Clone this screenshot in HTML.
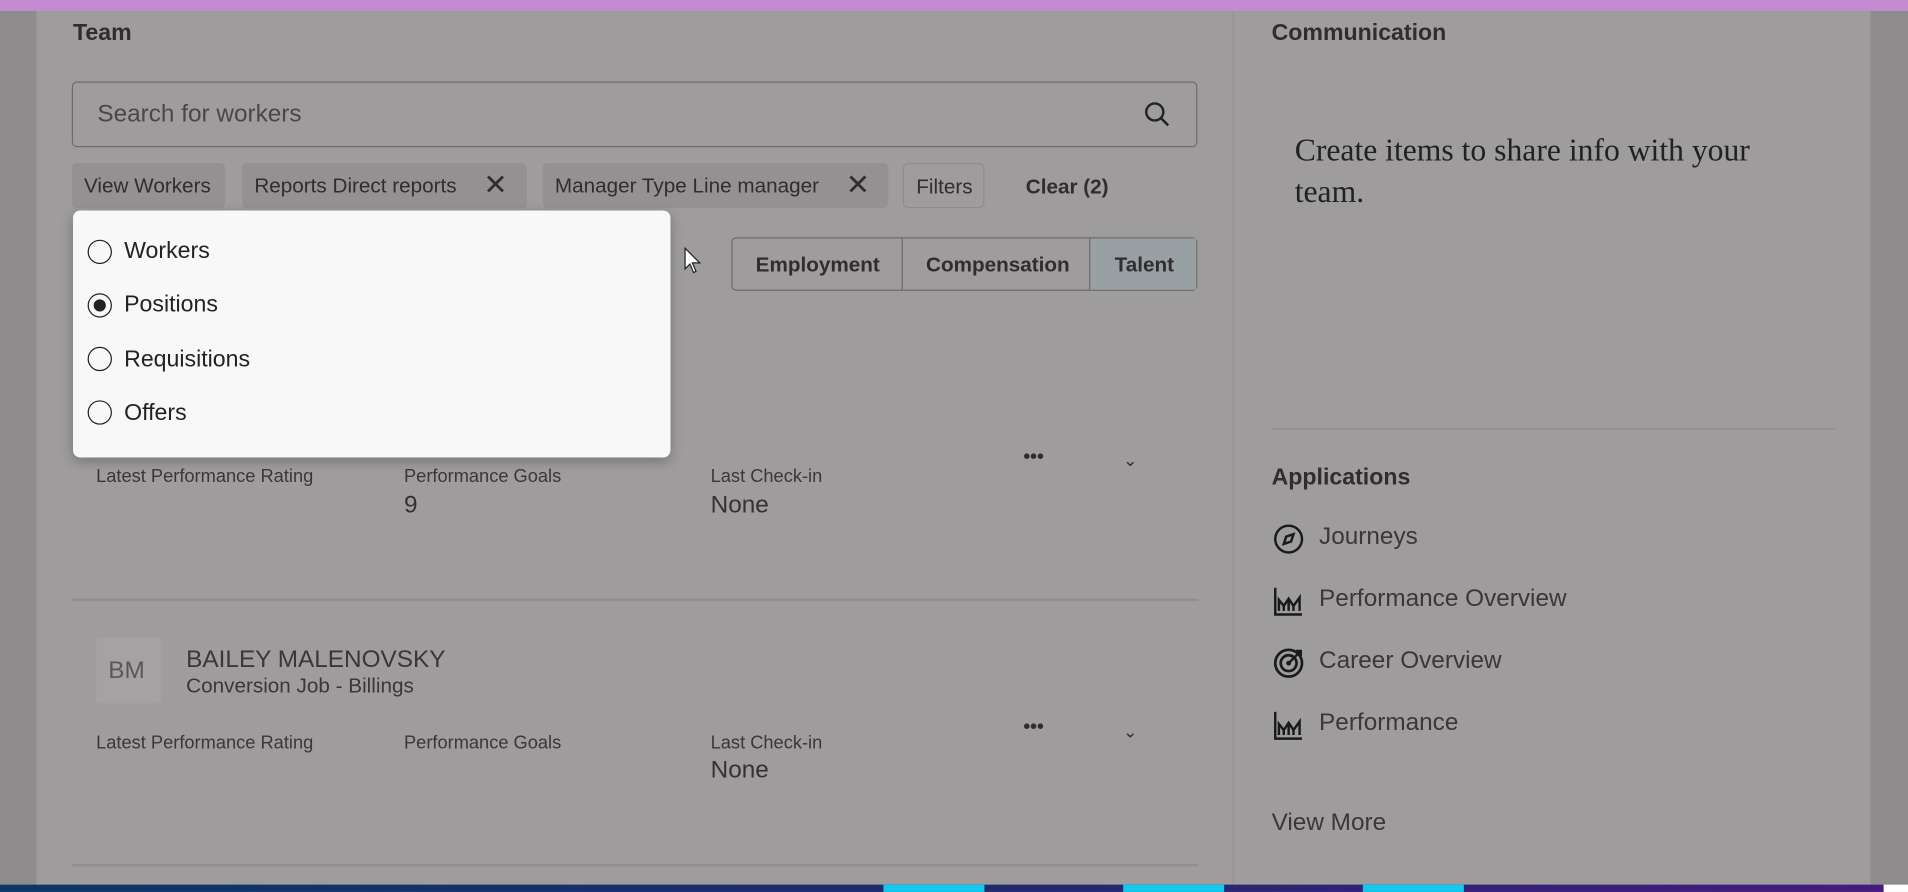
<!DOCTYPE html>
<html><head><meta charset="utf-8"><style>
html,body{margin:0;padding:0;width:1908px;height:892px;overflow:hidden;background:#9c9a9a}
#w{position:absolute;left:0;top:0;width:1568px;height:733px;transform:scale(1.21684);transform-origin:0 0;font-family:"Liberation Sans",sans-serif;color:#2f2e2d}
.a{position:absolute;white-space:nowrap}
.b{font-weight:bold}
.lbl{font-size:15px;color:#3a3837}
.val{font-size:20px;color:#343231}
.chip{position:absolute;top:134px;height:37px;background:#939191;border-radius:4px;font-size:17px;line-height:37px;padding:0 10px;box-sizing:border-box}
.x{display:inline-block;font-size:24px;vertical-align:top;margin-left:22px;font-weight:300}
.radio{position:absolute;left:72px;width:20px;height:20px;border:1.5px solid #222;border-radius:50%;box-sizing:border-box}
.rt{position:absolute;left:102px;font-size:19px;color:#222}
.app{position:absolute;left:1084px;font-size:20px;color:#3a3837}
</style></head><body><div id="w">
<div class="a" style="left:0;top:0;width:30px;height:733px;background:#8e8c8c"></div>
<div class="a" style="left:1537px;top:0;width:31px;height:733px;background:#8e8c8c"></div>
<div class="a" style="left:30px;top:0;width:1507px;height:733px;background:#9e9c9c"></div>
<div class="a" style="left:0;top:0;width:1568px;height:9px;background:#c48bd3"></div>
<div class="a" style="left:1013px;top:9px;width:1px;height:718px;background:#959393"></div>
<div class="a b" style="left:60px;top:17px;font-size:19px">Team</div>
<div class="a" style="left:59px;top:67px;width:925px;height:54px;border:1px solid #6e6c6b;border-radius:4px;box-sizing:border-box"></div>
<div class="a" style="left:80px;top:83px;font-size:20px;color:#4a4847">Search for workers</div>
<svg class="a" style="left:939px;top:82px" width="24" height="24" viewBox="0 0 24 24"><circle cx="10" cy="10" r="7" fill="none" stroke="#222" stroke-width="2"/><path d="M15 15l6 6" stroke="#222" stroke-width="2"/></svg>
<div class="chip" style="left:59px;width:126px">View Workers</div>
<div class="chip" style="left:199px;width:234px">Reports Direct reports<span class="x">✕</span></div>
<div class="chip" style="left:446px;width:284px">Manager Type Line manager<span class="x">✕</span></div>
<div class="chip" style="left:742px;width:67px;background:#9e9c9c;border:1px solid #8e8c8c">Filters</div>
<div class="a b" style="left:843px;top:144px;font-size:17px;font-weight:600">Clear (2)</div>
<div class="a" style="left:601px;top:195px;width:383px;height:44px;border:1px solid #6e6c6b;border-radius:4px;box-sizing:border-box"></div>
<div class="a" style="left:895px;top:196px;width:88px;height:42px;background:#99a0a4"></div>
<div class="a" style="left:741px;top:196px;width:1px;height:42px;background:#6e6c6b"></div>
<div class="a" style="left:895px;top:196px;width:1px;height:42px;background:#6e6c6b"></div>
<div class="a b" style="left:621px;top:208px;font-size:17px">Employment</div>
<div class="a b" style="left:761px;top:208px;font-size:17px">Compensation</div>
<div class="a b" style="left:916px;top:208px;font-size:17px">Talent</div>
<div class="a" style="left:60px;top:173px;width:491px;height:203px;background:#f9f8f8;border-radius:6px;box-shadow:0 3px 10px rgba(0,0,0,.25)"></div>
<div class="radio" style="top:197px"></div><div class="rt" style="top:196px">Workers</div>
<div class="radio" style="top:241px"></div><div class="a" style="left:77px;top:246px;width:10px;height:10px;border-radius:50%;background:#222"></div><div class="rt" style="top:240px">Positions</div>
<div class="radio" style="top:285px"></div><div class="rt" style="top:285px">Requisitions</div>
<div class="radio" style="top:329px"></div><div class="rt" style="top:329px">Offers</div>
<svg class="a" style="left:562px;top:203px" width="14" height="22" viewBox="0 0 14 22"><path d="M1 1v17l4-4 3 7 2-1-3-7h6z" fill="#fff" stroke="#222"/></svg>
<div class="a lbl" style="left:79px;top:383px">Latest Performance Rating</div>
<div class="a lbl" style="left:332px;top:383px">Performance Goals</div>
<div class="a lbl" style="left:584px;top:383px">Last Check-in</div>
<div class="a val" style="left:332px;top:404px">9</div>
<div class="a val" style="left:584px;top:404px">None</div>
<div class="a b" style="left:841px;top:367px;font-size:16px;letter-spacing:0px">•••</div>
<div class="a" style="left:923px;top:370px;font-size:14px">⌄</div>
<div class="a" style="left:59px;top:492px;width:926px;height:2px;background:#908e8e"></div>
<div class="a" style="left:79px;top:524px;width:54px;height:54px;background:#a4a2a2;border-radius:3px"></div>
<div class="a" style="left:89px;top:540px;font-size:20px;color:#5a5857">BM</div>
<div class="a" style="left:153px;top:531px;font-size:20px;color:#3a3837">BAILEY MALENOVSKY</div>
<div class="a" style="left:153px;top:554px;font-size:17px;color:#3a3837">Conversion Job - Billings</div>
<div class="a lbl" style="left:79px;top:602px">Latest Performance Rating</div>
<div class="a lbl" style="left:332px;top:602px">Performance Goals</div>
<div class="a lbl" style="left:584px;top:602px">Last Check-in</div>
<div class="a val" style="left:584px;top:622px">None</div>
<div class="a b" style="left:841px;top:589px;font-size:16px">•••</div>
<div class="a" style="left:923px;top:593px;font-size:14px">⌄</div>
<div class="a" style="left:59px;top:710px;width:926px;height:2px;background:#908e8e"></div>
<div class="a b" style="left:1045px;top:17px;font-size:19px">Communication</div>
<div class="a" style="left:1064px;top:107px;font-size:26px;line-height:34px;font-family:'Liberation Serif',serif;color:#222">Create items to share info with your<br>team.</div>
<div class="a" style="left:1045px;top:352px;width:463px;height:1px;background:#908e8e"></div>
<div class="a b" style="left:1045px;top:382px;font-size:19px">Applications</div>
<svg class="a" style="left:1046px;top:430px" width="26" height="26" viewBox="0 0 26 26"><circle cx="13" cy="13" r="11" fill="none" stroke="#1a1a1a" stroke-width="2"/><path d="M17 9l-2 6-6 2 2-6z" fill="none" stroke="#1a1a1a" stroke-width="2"/></svg>
<div class="app" style="top:430px">Journeys</div>
<svg class="a" style="left:1046px;top:481px" width="26" height="26" viewBox="0 0 26 26"><path d="M2 2v22h22M5 21v-9l4 5 4-6 4 6 5-7v11M9 21v-4M13 21v-9M17 21v-4" fill="none" stroke="#1a1a1a" stroke-width="2"/></svg>
<div class="app" style="top:481px">Performance Overview</div>
<svg class="a" style="left:1046px;top:532px" width="26" height="26" viewBox="0 0 26 26"><circle cx="13" cy="13" r="11" fill="none" stroke="#1a1a1a" stroke-width="2.2"/><circle cx="13" cy="13" r="6.5" fill="none" stroke="#1a1a1a" stroke-width="2.2"/><circle cx="13" cy="13" r="2" fill="#1a1a1a"/><path d="M13 13L22 4M19 3l4 0 0 4" stroke="#1a1a1a" stroke-width="2" fill="none"/></svg>
<div class="app" style="top:532px">Career Overview</div>
<svg class="a" style="left:1046px;top:583px" width="26" height="26" viewBox="0 0 26 26"><path d="M2 2v22h22M5 21v-9l4 5 4-6 4 6 5-7v11M9 21v-4M13 21v-9M17 21v-4" fill="none" stroke="#1a1a1a" stroke-width="2"/></svg>
<div class="app" style="top:583px">Performance</div>
<div class="a" style="left:1045px;top:665px;font-size:20px;color:#3a3837">View More</div>
<div class="a" style="left:0;top:727px;width:1548px;height:6px;background:linear-gradient(90deg,#0c3866,#1f2a6e 50%,#451c80)"></div>
<div class="a" style="left:726px;top:727px;width:83px;height:6px;background:#12c8ee"></div>
<div class="a" style="left:923px;top:727px;width:83px;height:6px;background:#12c8ee"></div>
<div class="a" style="left:1120px;top:727px;width:83px;height:6px;background:#12c8ee"></div>
<div class="a" style="left:1548px;top:727px;width:20px;height:6px;background:#fff"></div>
</div></body></html>
